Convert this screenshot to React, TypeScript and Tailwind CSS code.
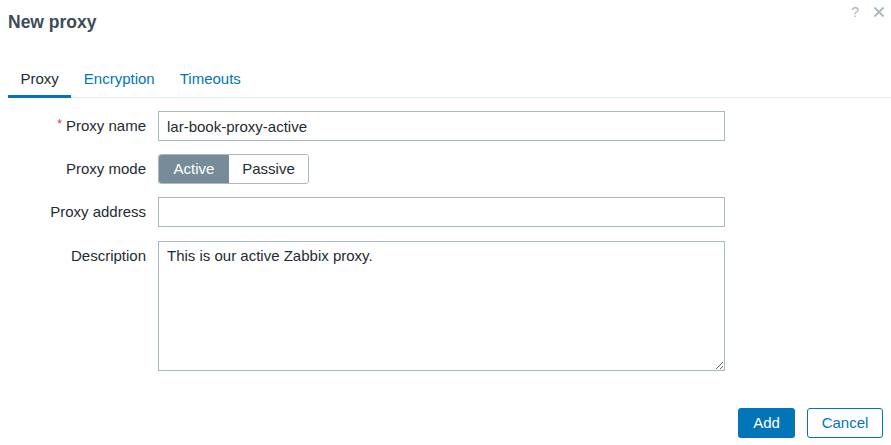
import { useState } from "react";

const font = { fontFamily: '"Liberation Sans", Arial, Helvetica, sans-serif' };

function FieldRow({
  label,
  required,
  top = false,
  children,
}: {
  label: string;
  required?: boolean;
  top?: boolean;
  children: React.ReactNode;
}) {
  return (
    <div className={`flex ${top ? "items-start" : "items-center"}`}>
      <div className="w-[146px] shrink-0 text-right text-[15px] leading-[30px] text-[#1f2c33]">
        {required && <span className="text-[#e33734] text-[12px] align-top mr-[4px] relative top-[-2px]">*</span>}
        {label}
      </div>
      <div className="ml-[12px]">{children}</div>
    </div>
  );
}

export default function App() {
  const [tab, setTab] = useState("Proxy");
  const [mode, setMode] = useState("Active");
  const tabs = ["Proxy", "Encryption", "Timeouts"];

  return (
    <div className="w-[891px] h-[445px] bg-white relative overflow-hidden" style={font}>
      {/* Header */}
      <div className="h-[60px] pl-[8px] pt-[11px]">
        <h1 className="text-[17.5px] leading-[22px] font-bold text-[#3d4c59]">New proxy</h1>
      </div>
      <div className="absolute top-[3px] right-[6px] flex items-center gap-[14px] text-[#aab7be]">
        <span className="text-[14px] leading-[18px]">?</span>
        <svg width="12" height="12" viewBox="0 0 12 12">
          <path d="M1.5 1.5 L10.5 10.5 M10.5 1.5 L1.5 10.5" stroke="currentColor" strokeWidth="1.8" />
        </svg>
      </div>

      {/* Tabs */}
      <div className="ml-[8px] flex border-b border-[#e6eaec]">
        {tabs.map((t) => (
          <button
            key={t}
            onClick={() => setTab(t)}
            className={`px-[12.5px] pt-[10px] pb-[7px] text-[15px] leading-[18px] border-b-[3px] mb-[-1px] ${
              tab === t ? "text-[#1f2c33] border-[#0275b8]" : "text-[#0275b8] border-transparent"
            }`}
          >
            {t}
          </button>
        ))}
      </div>

      {/* Form */}
      <div className="mt-[13px] flex flex-col">
        <FieldRow label="Proxy name" required>
          <input
            defaultValue="lar-book-proxy-active"
            className="w-[567px] h-[30px] border border-[#a9b9c0] px-[8px] text-[15px] text-[#1f2c33] outline-none"
          />
        </FieldRow>
        <div className="mt-[13px]">
          <FieldRow label="Proxy mode">
            <div className="flex h-[30px] border border-[#a9b9c0] rounded-[3px] overflow-hidden">
              {["Active", "Passive"].map((m) => (
                <button
                  key={m}
                  onClick={() => setMode(m)}
                  className={`text-[15px] leading-[28px] ${
                    mode === m ? "bg-[#768d99] text-white w-[70px]" : "bg-white text-[#1f2c33] w-[79px]"
                  }`}
                >
                  {m}
                </button>
              ))}
            </div>
          </FieldRow>
        </div>
        <div className="mt-[13px]">
          <FieldRow label="Proxy address">
            <input className="w-[567px] h-[30px] border border-[#a9b9c0] px-[8px] text-[15px] outline-none" />
          </FieldRow>
        </div>
        <div className="mt-[14px]">
          <FieldRow label="Description" top>
            <textarea
              defaultValue="This is our active Zabbix proxy."
              className="block w-[567px] h-[130px] border border-[#a9b9c0] px-[8px] py-[5px] text-[15px] leading-[18px] text-[#1f2c33] outline-none"
            />
          </FieldRow>
        </div>
      </div>

      {/* Footer */}
      <div className="mt-[37px] mr-[8px] flex justify-end gap-[12px]">
        <button className="w-[57px] h-[30px] rounded-[3px] bg-[#0275b8] text-white text-[15px]">Add</button>
        <button className="w-[76px] h-[30px] rounded-[3px] border border-[#0275b8] bg-white text-[#0275b8] text-[15px]">
          Cancel
        </button>
      </div>
    </div>
  );
}
